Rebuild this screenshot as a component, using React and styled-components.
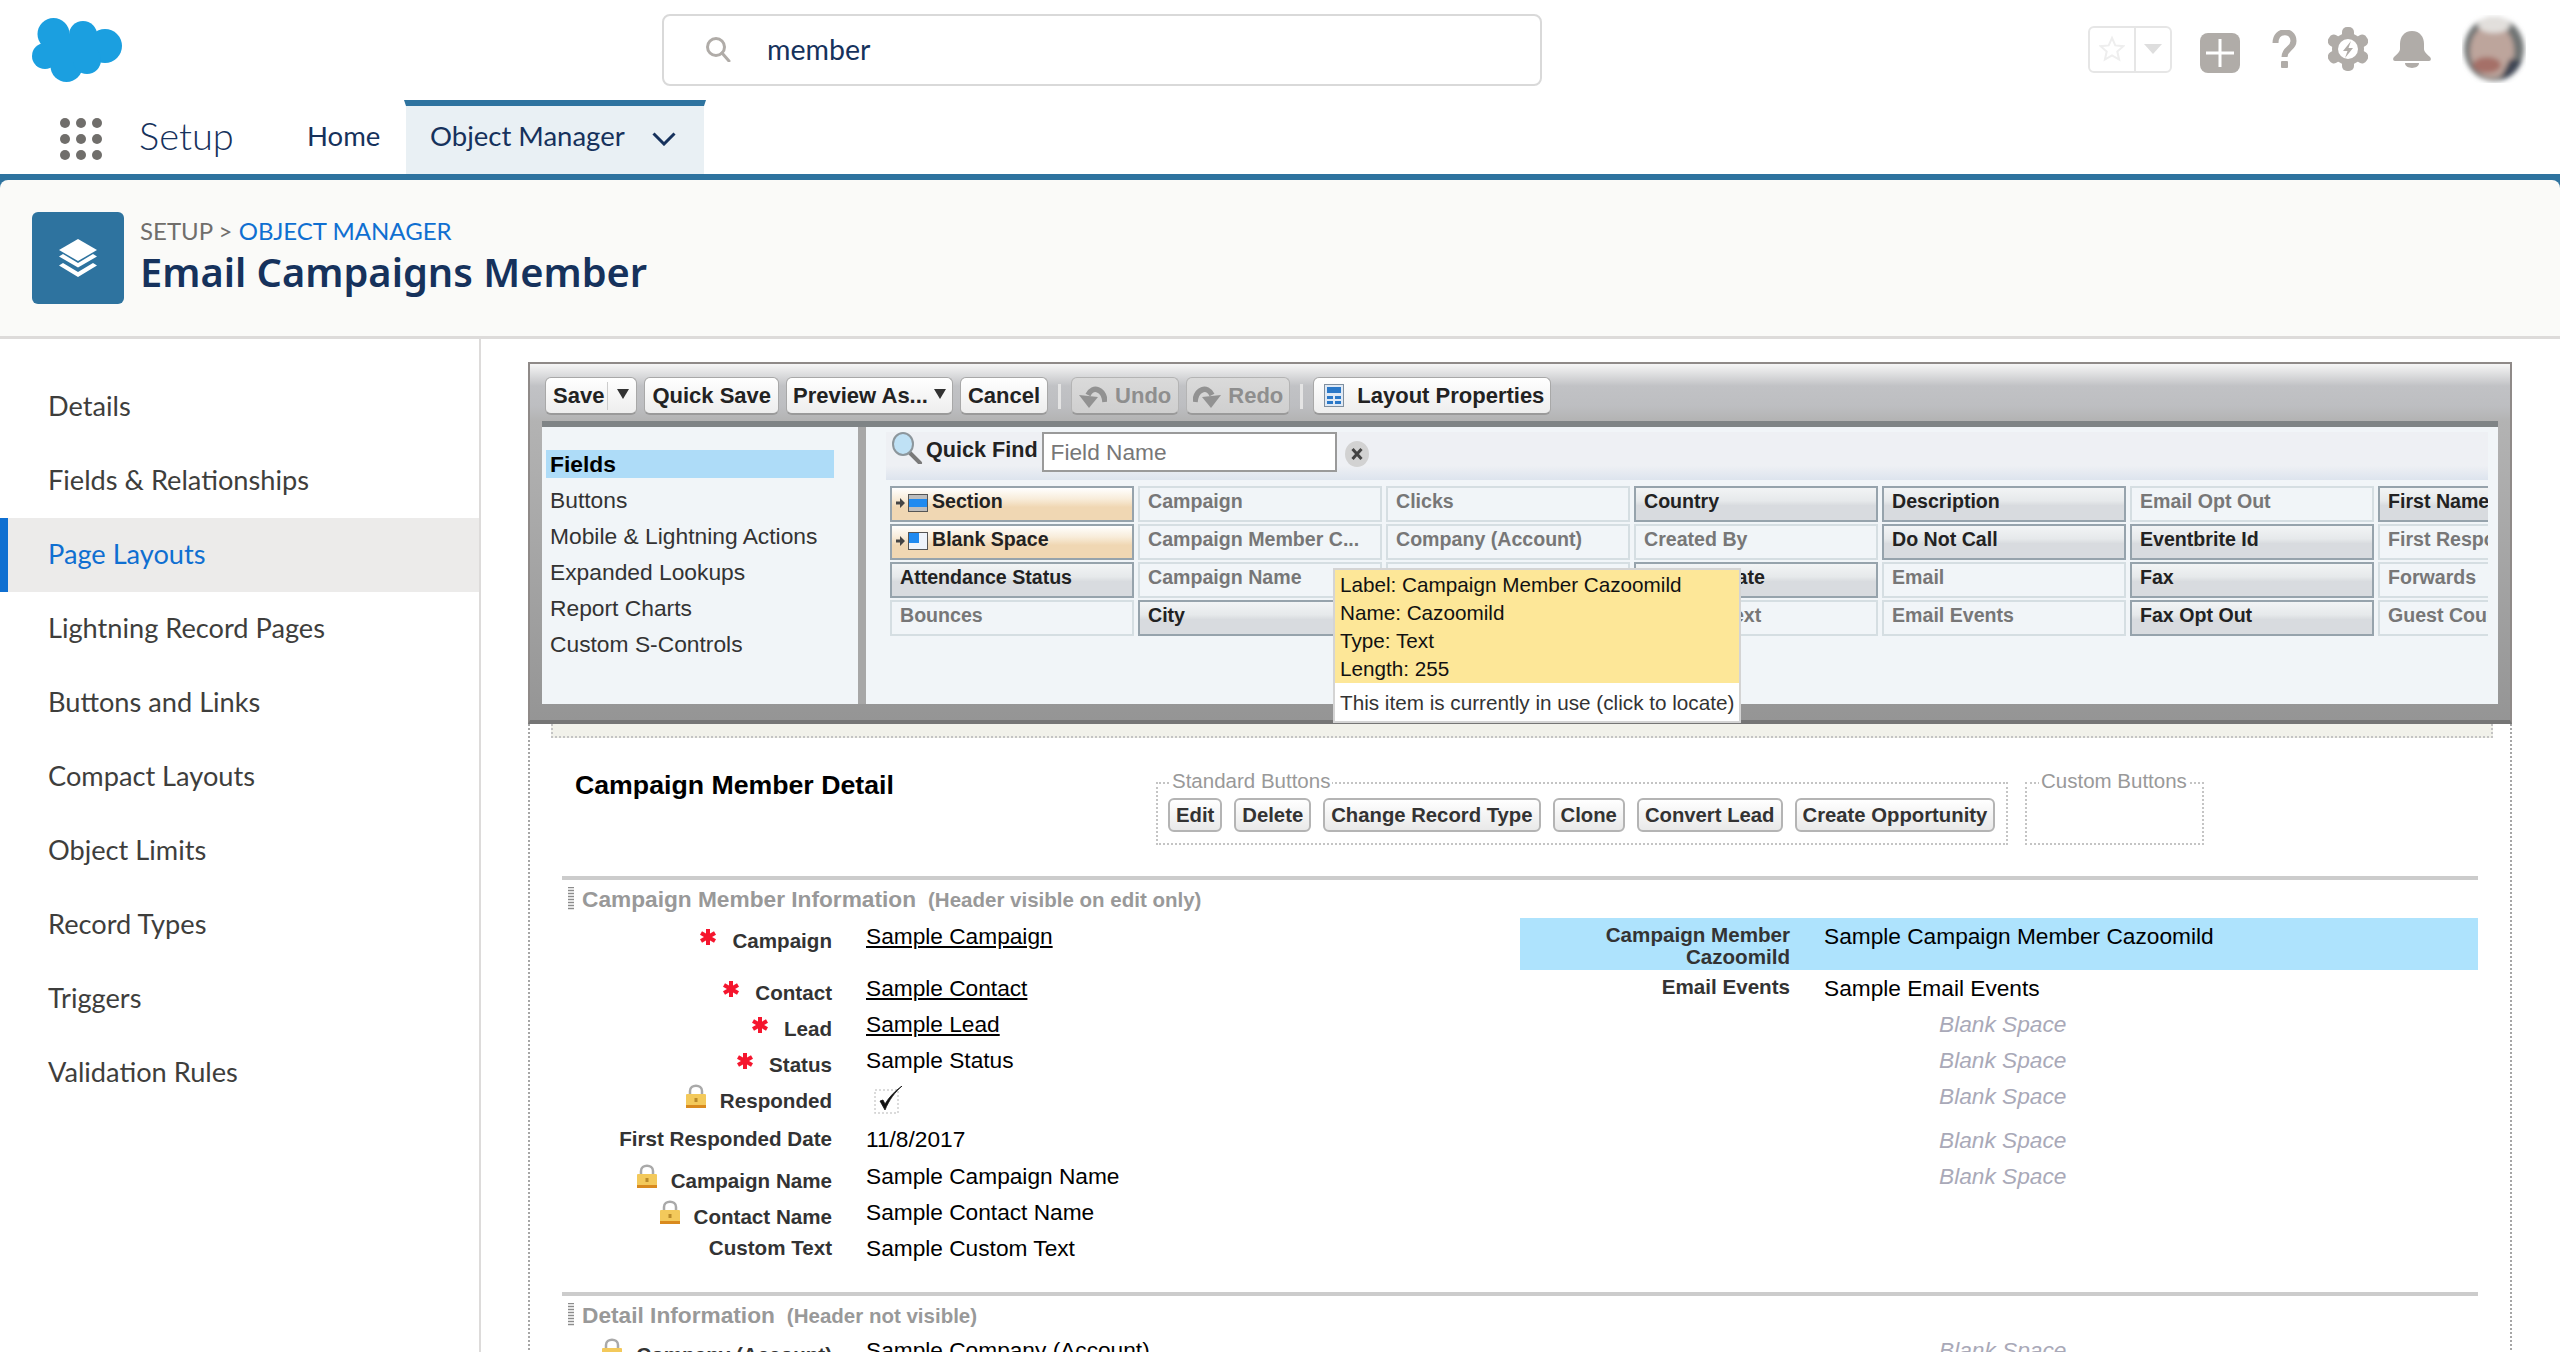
import React from "react";
import styled, { createGlobalStyle } from "styled-components";

const GlobalStyle = createGlobalStyle`
  html, body { margin: 0; padding: 0; background: #fff; }
  body { height: 1352px; overflow: hidden; font-family: "Lato", sans-serif; }
`;

const Page = styled.div`
  width: 2560px;
  height: 1352px;
  overflow: hidden;
  display: flex;
  flex-direction: column;
`;

const TopBar = styled.div`
  height: 100px;
  flex: none;
  display: flex;
  align-items: flex-start;
  position: relative;
`;
const LogoWrap = styled.svg`
  width: 90px;
  height: 64px;
  margin: 18px 0 0 32px;
  flex: none;
`;
const SearchBox = styled.div`
  width: 880px;
  height: 72px;
  box-sizing: border-box;
  margin: 14px 0 0 540px;
  border: 2px solid #d9d9d9;
  border-radius: 8px;
  display: flex;
  align-items: center;
  padding: 0 0 2px 41px;
  gap: 36px;
  font-size: 28.5px;
  color: #16325c;
`;
const TopIcons = styled.div`
  display: flex;
  align-items: center;
  margin: 15px 0 0 546px;
  height: 68px;
`;
const FavBox = styled.div`
  width: 84px;
  height: 47px;
  box-sizing: border-box;
  border: 2px solid #e6e6e6;
  border-radius: 6px;
  display: grid;
  grid-template-columns: 46px 1fr;
  align-items: center;
  justify-items: center;
  margin-right: 28px;
`;
const FavStar = styled.svg`
  width: 26px;
  height: 43px;
  padding: 0 9px;
  border-right: 2px solid #e6e6e6;
  box-sizing: content-box;
`;
const PlusTile = styled.div`
  width: 40px;
  height: 40px;
  background: #b0aca8;
  border-radius: 8px;
  display: flex;
  align-items: center;
  justify-content: center;
  margin: 8px 32px 0 0;
`;
const IconSlot = styled.svg`
  flex: none;
  margin-right: ${(p) => p.$gap}px;
`;
const AvatarImg = styled.svg`
  width: 64px;
  height: 68px;
  flex: none;
`;

const NavBar = styled.div`
  height: 74px;
  flex: none;
  display: flex;
  align-items: stretch;
  padding-left: 60px;
  color: #16325c;
`;
const AppLauncher = styled.svg`
  width: 42px;
  height: 42px;
  margin-top: 18px;
  flex: none;
`;
const AppName = styled.div`
  font-size: 38px;
  font-weight: 300;
  margin-left: 37px;
  width: 168px;
  line-height: 70px;
`;
const NavItem = styled.div`
  font-size: 27.5px;
  line-height: 72px;
  width: 97px;
`;
const ActiveTab = styled.div`
  width: 302px;
  box-sizing: border-box;
  border-style: solid;
  border-width: 6px 2px 0;
  border-color: #2e739f #fff;
  background: #e9f0f4;
  font-size: 27.5px;
  line-height: 60px;
  padding-left: 24px;
  display: flex;
  align-items: flex-start;
  gap: 27px;
`;
const Chevron = styled.svg`
  width: 24px;
  height: 14px;
  margin-top: 26px;
`;

const HeroWrap = styled.div`
  background: #2e739f;
  padding-top: 6px;
  flex: none;
`;
const Hero = styled.div`
  height: 124px;
  background: #fafaf8;
  border-radius: 8px 8px 0 0;
  border-bottom: 3px solid #dddbda;
  display: flex;
  padding: 32px 0 0 32px;
  gap: 16px;
`;
const HeroTile = styled.div`
  width: 92px;
  height: 92px;
  background: #2e739f;
  border-radius: 6px;
  display: flex;
  align-items: center;
  justify-content: center;
`;
const Crumbs = styled.div`
  font-size: 24px;
  line-height: 30px;
  color: #706e6b;
  margin-top: 4px;
`;
const CrumbLink = styled.span`
  color: #0f6fd1;
`;
const HeroTitle = styled.div`
  font-family: "Noto Sans", sans-serif;
  font-size: 39.8px;
  font-weight: 600;
  line-height: 52px;
  color: #16325c;
`;

const Main = styled.div`
  flex: 1;
  display: flex;
  min-height: 0;
`;
const Sidebar = styled.div`
  width: 481px;
  flex: none;
  box-sizing: border-box;
  border-right: 2px solid #dddbda;
  padding-top: 31px;
`;
const SideItem = styled.div`
  height: 74px;
  line-height: 72px;
  font-size: 27.2px;
  box-sizing: border-box;
  padding-left: ${(p) => (p.$active ? 40 : 48)}px;
  color: ${(p) => (p.$active ? "#0f6fd1" : "#3e3e3c")};
  background: ${(p) => (p.$active ? "#ecebea" : "transparent")};
  border-left: ${(p) => (p.$active ? "8px solid #0f6fd1" : "0")};
`;

const Content = styled.div`
  flex: 1;
  padding: 23px 0 0 47px;
  font-family: "Liberation Sans", Arial, sans-serif;
`;
const EditorFrame = styled.div`
  width: 1984px;
  height: 362px;
  box-sizing: border-box;
  position: relative;
  border: 2px solid #8f8a88;
  border-bottom: 4px solid #757575;
  background: linear-gradient(#f6f6f6 0, #c1c2c5 22px, #bdbec1 42px, #b3b3b3 57px, #959595 100%);
`;
const Toolbar = styled.div`
  height: 57px;
  box-sizing: border-box;
  padding: 13px 0 0 15px;
  display: flex;
  gap: 7px;
  align-items: flex-start;
`;
const ToolButton = styled.div`
  height: 38px;
  box-sizing: border-box;
  border: 1px solid ${(p) => (p.$off ? "#b4b4b4" : "#a8a8a8")};
  border-bottom: 2px solid #9a9a9a;
  border-radius: 6px;
  padding: 0 ${(p) => p.$right ?? 7}px 0 ${(p) => p.$left ?? 7}px;
  display: flex;
  align-items: center;
  gap: ${(p) => p.$gap ?? 6}px;
  font-weight: 700;
  font-size: 22px;
  background: ${(p) => (p.$off ? "linear-gradient(#dadada, #cfcfcf)" : "linear-gradient(#fff, #ededed)")};
  color: ${(p) => (p.$off ? "#8e8e8e" : "#222")};
  white-space: nowrap;
`;
const ToolSep = styled.div`
  width: 3px;
  height: 25px;
  margin: 7px 3px 0;
  background: #e4e4e4;
`;
const TriangleMark = styled.span`
  width: 0;
  height: 0;
  border-left: 6px solid transparent;
  border-right: 6px solid transparent;
  border-top: 10px solid #333;
  margin-bottom: 4px;
`;
const SplitBar = styled.span`
  width: 1px;
  height: 28px;
  background: #ccc;
  margin: 0 3px 0 -3px;
`;
const FlipSvg = styled.svg`
  transform: ${(p) => (p.$flip ? "scaleX(-1)" : "none")};
`;
const EditorBody = styled.div`
  margin: 0 12px;
  height: 283px;
  box-sizing: border-box;
  border-top: 6px solid #7f8486;
  display: grid;
  grid-template-columns: 316px 8px 1fr;
  background: #f1f5f8;
`;
const PaletteList = styled.div`
  padding: 23px 24px 0 4px;
  display: flex;
  flex-direction: column;
  gap: 8px;
`;
const PaletteTab = styled.div`
  height: 28px;
  line-height: 28px;
  padding-left: 4px;
  font-size: 22.8px;
  color: ${(p) => (p.$active ? "#000" : "#333")};
  font-weight: ${(p) => (p.$active ? 700 : 400)};
  background: ${(p) => (p.$active ? "#aedcf8" : "transparent")};
`;
const PaletteDivider = styled.div`
  background: #a7a7a7;
`;
const PalettePane = styled.div`
  padding: 5px 10px 0 20px;
  min-width: 0;
`;
const QuickFind = styled.div`
  height: 48px;
  background: linear-gradient(#eef0f4 0, #eef0f4 70%, #dde4ee 100%);
  display: flex;
  align-items: flex-start;
  padding-left: 5px;
`;
const QuickLabel = styled.div`
  font-size: 21.6px;
  font-weight: 700;
  color: #222;
  line-height: 36px;
  margin: 0 4px 0 3px;
`;
const QuickInput = styled.div`
  width: 295px;
  height: 40px;
  box-sizing: border-box;
  border: 2px solid #9a9a9a;
  background: #fff;
  color: #777;
  font-size: 22.7px;
  line-height: 36px;
  padding-left: 7px;
`;
const ClearSlot = styled.div`
  margin: 9px 0 0 8px;
`;
const PaletteGrid = styled.div`
  margin: 6px 0 0 4px;
  display: grid;
  grid-auto-flow: column;
  grid-template-rows: repeat(4, 36px);
  grid-auto-columns: 244px;
  gap: 2px 4px;
  overflow: hidden;
`;
const cellStyles = {
  used: "border-color:#96a3ac;color:#222;background:linear-gradient(#f2f4f5 0,#e6e9eb 40%,#d8dbdf 55%,#d8dbdf 100%);",
  free: "border-color:#d5dee2;color:#777;background:#f1f5f8;",
  special: "border-color:#96a3ac;color:#222;background:linear-gradient(#fff 0,#f8ecd9 35%,#f0d7b3 60%,#f0d7b3 100%);",
};
const PaletteCell = styled.div`
  box-sizing: border-box;
  border: 2px solid;
  ${(p) => cellStyles[p.$kind]}
  font-size: 19.6px;
  font-weight: 700;
  line-height: 26px;
  padding-left: ${(p) => (p.$kind === "special" ? 4 : 8)}px;
  white-space: nowrap;
  overflow: hidden;
  display: flex;
  align-items: flex-start;
  gap: 4px;
`;
const CellGlyph = styled.svg`
  margin-top: 5px;
  flex: none;
`;
const Tooltip = styled.div`
  position: absolute;
  left: 803px;
  top: 204px;
  width: 408px;
  height: 155px;
  box-sizing: border-box;
  border: 2px solid #d4d4d4;
  background: #fff;
  font-size: 20.7px;
  color: #111;
  z-index: 2;
`;
const TooltipInfo = styled.div`
  background: #fde798;
  height: 112px;
  padding: 1px 0 0 5px;
  line-height: 28px;
`;
const TooltipNote = styled.div`
  padding: 7px 0 0 5px;
  line-height: 26px;
  color: #333;
  white-space: nowrap;
`;

const Canvas = styled.div`
  width: 1984px;
  box-sizing: border-box;
  border-left: 2px dotted #a6a6a6;
  border-right: 2px dotted #a6a6a6;
  padding: 0 0 0 32px;
`;
const DropBand = styled.div`
  height: 14px;
  margin: 0 17px 0 -11px;
  box-sizing: border-box;
  background: #f1f1ea;
  border-bottom: 2px dotted #c4c4c4;
  border-left: 2px dotted #c4c4c4;
  border-right: 2px dotted #c4c4c4;
`;
const DetailHead = styled.div`
  height: 138px;
  display: flex;
  align-items: flex-start;
`;
const DetailTitle = styled.div`
  width: 594px;
  flex: none;
  box-sizing: border-box;
  padding: 32px 0 0 13px;
  font-size: 26.7px;
  font-weight: 700;
  line-height: 30px;
  color: #000;
`;
const ButtonGroup = styled.fieldset`
  box-sizing: border-box;
  width: ${(p) => p.$width}px;
  height: 75px;
  margin: 32px ${(p) => p.$after}px 0 0;
  padding: 2px 0 0 10px;
  border: 2px dotted #c4c4c4;
  display: flex;
  gap: 12px;
`;
const GroupLegend = styled.legend`
  font-size: 20.5px;
  line-height: 22px;
  color: #999;
  padding: 0 2px 4px;
  margin-left: 2px;
`;
const DetailButton = styled.div`
  height: 34px;
  box-sizing: border-box;
  border: 2px solid #b4b4b4;
  border-radius: 6px;
  background: linear-gradient(#fff, #e9e9e9);
  font-size: 20.3px;
  font-weight: 700;
  line-height: 30px;
  padding: 0 6px;
  color: #333;
  white-space: nowrap;
`;
const LayoutSection = styled.div`
  width: 1916px;
  border-top: 4px solid #ccc;
  margin-bottom: ${(p) => p.$after}px;
`;
const SectionHead = styled.div`
  height: 38px;
  display: flex;
  align-items: center;
  padding: 1px 0 0 6px;
  box-sizing: border-box;
  gap: 8px;
  color: #999;
  font-weight: 700;
`;
const DragHandle = styled.div`
  width: 6px;
  height: 23px;
  margin-top: -2px;
  background: repeating-linear-gradient(#8c8c8c 0, #8c8c8c 1.500px, #e4e4e4 1.500px, #e4e4e4 3px);
`;
const SectionName = styled.span`
  font-size: 22.7px;
`;
const SectionHint = styled.span`
  font-size: 20.5px;
  margin-left: 4px;
`;
const FieldRow = styled.div`
  height: ${(p) => p.$height}px;
  display: grid;
  grid-template-columns: 958px 958px;
`;
const FieldCell = styled.div`
  display: grid;
  grid-template-columns: 270px 1fr;
  column-gap: 34px;
  background: ${(p) => (p.$hot ? "#aee3fd" : "transparent")};
`;
const FieldLabel = styled.div`
  padding-top: ${(p) => p.$top}px;
  display: flex;
  justify-content: flex-end;
  align-items: flex-start;
  text-align: right;
  gap: ${(p) => p.$gap || 16}px;
  font-size: 20.6px;
  font-weight: 700;
  line-height: 22px;
  color: #333;
  white-space: ${(p) => (p.$wrap ? "normal" : "nowrap")};
`;
const FieldValue = styled.div`
  padding-top: ${(p) => p.$top}px;
  font-size: 22.7px;
  line-height: 22px;
  color: #000;
  white-space: nowrap;
  text-decoration: ${(p) => (p.$link ? "underline" : "none")};
`;
const BlankValue = styled.div`
  padding: ${(p) => p.$top}px 0 0 419px;
  font-size: 22.7px;
  font-style: italic;
  line-height: 22px;
  color: #a9a9b8;
  white-space: nowrap;
`;
const CheckSlot = styled.svg`
  width: 30px;
  height: 28px;
  margin: 8px 0 0 8px;
  display: block;
`;
const MarkIcon = styled.svg`
  flex: none;
  margin-top: ${(p) => p.$up}px;
`;

function SalesforceCloud() {
  return (
    <LogoWrap viewBox="0 0 90 64">
      <g fill="#1b9fe0">
        <circle cx="21.500" cy="16" r="16" />
        <circle cx="51" cy="17" r="14" />
        <circle cx="73" cy="28" r="17" />
        <circle cx="13" cy="38" r="13" />
        <circle cx="34.500" cy="48" r="16" />
        <circle cx="55" cy="42" r="14" />
        <rect x="15" y="16" width="50" height="28" />
      </g>
    </LogoWrap>
  );
}

function Magnifier() {
  return (
    <svg width="26" height="26" viewBox="0 0 26 26" fill="none" stroke="#b0aca8" strokeWidth="3">
      <circle cx="11" cy="11" r="8.500" />
      <path d="M17 17l7 8" strokeLinecap="round" />
    </svg>
  );
}

function HeaderIcons() {
  return (
    <TopIcons>
      <FavBox>
        <FavStar viewBox="0 0 26 43" fill="none" stroke="#eeeeee" strokeWidth="2">
          <path d="M13 10l3.300 7.400 8 .8-6 5.300 1.800 8L13 27.400 5.900 31.500l1.800-8-6-5.300 8-.8z" />
        </FavStar>
        <svg width="18" height="10" viewBox="0 0 18 10">
          <path d="M0 0h18L9 10z" fill="#dedede" />
        </svg>
      </FavBox>
      <PlusTile>
        <svg width="28" height="28" viewBox="0 0 28 28">
          <path d="M12.500 0h3v12.500H28v3H15.500V28h-3V15.500H0v-3h12.500z" fill="#fff" />
        </svg>
      </PlusTile>
      <IconSlot $gap={31} width="25" height="38" viewBox="0 0 25 38" fill="none">
        <path d="M3.500 13C3.500 -1 21.500 -1 21.500 11c0 8-9 7-9 16" stroke="#b0aca8" strokeWidth="6" />
        <rect x="9" y="31" width="7" height="7" rx="1" fill="#b0aca8" />
      </IconSlot>
      <IconSlot $gap={25} width="40" height="44" viewBox="0 0 40 44">
        <g fill="#b0aca8">
          <circle cx="20" cy="22" r="16" />
          <rect x="14" y="0" width="12" height="44" rx="5" />
          <rect x="14" y="0" width="12" height="44" rx="5" transform="rotate(60 20 22)" />
          <rect x="14" y="0" width="12" height="44" rx="5" transform="rotate(120 20 22)" />
        </g>
        <circle cx="20" cy="22" r="10" fill="#fff" />
        <path d="M23 14l-8 10h4.500L17 31l8-10h-4.500z" fill="#b0aca8" />
      </IconSlot>
      <IconSlot $gap={31} width="38" height="37" viewBox="0 0 38 37">
        <path d="M19 0c8 0 12 6 12 13v5c0 3 3 5 6 8 1.500 1.500 1 4-1 4H2c-2 0-2.500-2.500-1-4 3-3 6-5 6-8v-5C7 6 11 0 19 0z" fill="#b0aca8" />
        <path d="M12 32h14c0 6.500-14 6.500-14 0z" fill="#b0aca8" />
      </IconSlot>
      <AvatarImg viewBox="0 0 64 68">
        <defs>
          <filter id="avatarBlur" x="-20%" y="-20%" width="140%" height="140%"><feGaussianBlur stdDeviation="2.600" /></filter>
          <clipPath id="avatarClip"><ellipse cx="32" cy="34" rx="30" ry="32" /></clipPath>
        </defs>
        <g filter="url(#avatarBlur)">
          <ellipse cx="32" cy="34" rx="30" ry="32" fill="#6f7373" />
          <g clipPath="url(#avatarClip)">
            <ellipse cx="30" cy="36" rx="22" ry="27" fill="#bda59c" />
            <ellipse cx="32" cy="10" rx="16" ry="8" fill="#e2dfdc" />
            <ellipse cx="25" cy="50" rx="14" ry="8" fill="#a56f68" />
            <path d="M48 44l16 2v22H36z" fill="#3c4552" />
          </g>
        </g>
      </AvatarImg>
    </TopIcons>
  );
}

function Launcher() {
  const dots = [5, 21, 37];
  return (
    <AppLauncher viewBox="0 0 42 42">
      {dots.map((y) => dots.map((x) => <circle key={`${x}-${y}`} cx={x} cy={y} r="5" fill="#706e6b" />))}
    </AppLauncher>
  );
}

function LayersGlyph() {
  return (
    <svg width="38" height="38" viewBox="0 0 38 38" fill="#fff">
      <path d="M19 0l19 11-19 11L0 11z" />
      <path d="M4 15l15 9 15-9 4 2.500-19 11-19-11z" />
      <path d="M4 24l15 9 15-9 4 2.500L19 38 0 26.500z" />
    </svg>
  );
}

function UndoGlyph({ flip }) {
  return (
    <FlipSvg $flip={flip} width="28" height="24" viewBox="0 0 28 24">
      <path d="M26 18C25 5 14 1 9 11" fill="none" stroke="#929292" strokeWidth="5.500" />
      <path d="M0 11l19 2-9 11z" fill="#929292" />
    </FlipSvg>
  );
}

function LayoutGlyph() {
  return (
    <svg width="20" height="23" viewBox="0 0 20 23">
      <rect x="0.500" y="0.500" width="19" height="22" fill="#dfe9f5" stroke="#7f8f9f" />
      <rect x="3" y="3" width="14" height="6" fill="#2a78c8" />
      <rect x="3" y="12" width="6" height="3" fill="#2a78c8" />
      <rect x="11" y="12" width="6" height="3" fill="#2a78c8" />
      <rect x="3" y="17" width="6" height="3" fill="#2a78c8" />
      <rect x="11" y="17" width="6" height="3" fill="#2a78c8" />
    </svg>
  );
}

function FindGlyph() {
  return (
    <svg width="32" height="32" viewBox="0 0 32 32">
      <path d="M19 21l10 10" stroke="#7a7a7a" strokeWidth="4" strokeLinecap="round" />
      <ellipse cx="12" cy="12" rx="10" ry="11" fill="#bfe1f5" stroke="#8c969c" strokeWidth="2" />
    </svg>
  );
}

function ClearGlyph() {
  return (
    <svg width="24" height="26" viewBox="0 0 24 26">
      <ellipse cx="12" cy="13" rx="12" ry="13" fill="#d2d2d2" />
      <path d="M7.500 8l9 10m0-10l-9 10" stroke="#444" strokeWidth="3" />
    </svg>
  );
}

function PaletteGlyph({ blank }) {
  return (
    <CellGlyph width="32" height="20" viewBox="0 0 32 20">
      <path d="M0 8.500h4V5l5 5-5 5v-3.500H0z" fill="#444" />
      {blank ? (
        <g>
          <rect x="12.500" y="1.500" width="19" height="17" fill="#eef3fa" stroke="#555" />
          <rect x="13" y="2" width="10" height="10" fill="#1f8af0" />
        </g>
      ) : (
        <g>
          <rect x="12.500" y="1.500" width="19" height="17" fill="#bdbdbd" stroke="#555" />
          <rect x="13" y="6" width="18" height="8" fill="#1f8af0" />
        </g>
      )}
    </CellGlyph>
  );
}

function RequiredMark() {
  return (
    <MarkIcon $up={-1} width="16" height="16" viewBox="0 0 16 16">
      <g stroke="#f5162e" strokeWidth="4">
        <path d="M8 0v16" />
        <path d="M1 4l14 8" />
        <path d="M15 4L1 12" />
      </g>
    </MarkIcon>
  );
}

function LockMark() {
  return (
    <MarkIcon $up={-6} width="20" height="24" viewBox="0 0 20 24">
      <path d="M4 11V7c0-7 12-7 12 0v4" fill="none" stroke="#a9a9a9" strokeWidth="2.500" />
      <rect x="0" y="10" width="20" height="14" rx="1" fill="#f3c95b" />
      <rect x="0" y="21" width="20" height="3" fill="#d98a1e" />
      <rect x="8.500" y="14" width="3" height="4" fill="#b98a2a" />
    </MarkIcon>
  );
}

function CheckedBox() {
  return (
    <CheckSlot viewBox="0 0 30 28">
      <rect x="1" y="4" width="23" height="23" fill="none" stroke="#d0d0d0" strokeWidth="1.500" strokeDasharray="2 2" />
      <path d="M6 15l5 9C15 14 21 6 28 0c-7 5-13 11-17 18l-2-4z" fill="#111" stroke="#111" strokeWidth="0.800" />
    </CheckSlot>
  );
}

const sideLinks = [
  "Details",
  "Fields & Relationships",
  "Page Layouts",
  "Lightning Record Pages",
  "Buttons and Links",
  "Compact Layouts",
  "Object Limits",
  "Record Types",
  "Triggers",
  "Validation Rules",
];

const paletteTabs = [
  "Fields",
  "Buttons",
  "Mobile & Lightning Actions",
  "Expanded Lookups",
  "Report Charts",
  "Custom S-Controls",
];

const paletteCells = [
  ["Section", "special", "section"],
  ["Blank Space", "special", "blank"],
  ["Attendance Status", "used"],
  ["Bounces", "free"],
  ["Campaign", "free"],
  ["Campaign Member C...", "free"],
  ["Campaign Name", "free"],
  ["City", "used"],
  ["Clicks", "free"],
  ["Company (Account)", "free"],
  ["", "free"],
  ["", "free"],
  ["Country", "used"],
  ["Created By", "free"],
  ["Created Date", "used"],
  ["Custom Text", "free"],
  ["Description", "used"],
  ["Do Not Call", "used"],
  ["Email", "free"],
  ["Email Events", "free"],
  ["Email Opt Out", "free"],
  ["Eventbrite Id", "used"],
  ["Fax", "used"],
  ["Fax Opt Out", "used"],
  ["First Name", "used"],
  ["First Responded Date", "free"],
  ["Forwards", "free"],
  ["Guest Count", "free"],
];

const detailButtons = ["Edit", "Delete", "Change Record Type", "Clone", "Convert Lead", "Create Opportunity"];

const infoRows = [
  { h: 52, label: "Campaign", mark: "req", lt: 12, value: "Sample Campaign", link: true, vt: 7, right: "hot" },
  { h: 36, label: "Contact", mark: "req", lt: 12, value: "Sample Contact", link: true, vt: 7, right: "email" },
  { h: 36, label: "Lead", mark: "req", lt: 12, value: "Sample Lead", link: true, vt: 7, blank: 7 },
  { h: 36, label: "Status", mark: "req", lt: 12, value: "Sample Status", vt: 7, blank: 7 },
  { h: 41, label: "Responded", mark: "lock", lt: 12, check: true, blank: 7 },
  { h: 40, label: "First Responded Date", lt: 9, value: "11/8/2017", vt: 9, blank: 10 },
  { h: 36, label: "Campaign Name", mark: "lock", lt: 11, value: "Sample Campaign Name", vt: 6, blank: 6 },
  { h: 36, label: "Contact Name", mark: "lock", lt: 11, value: "Sample Contact Name", vt: 6 },
  { h: 36, label: "Custom Text", lt: 6, value: "Sample Custom Text", vt: 6 },
];

function InfoRow({ row }) {
  return (
    <FieldRow $height={row.h}>
      <FieldCell>
        <FieldLabel $top={row.lt} $gap={row.mark === "lock" ? 14 : 16}>
          {row.mark === "req" && <RequiredMark />}
          {row.mark === "lock" && <LockMark />}
          {row.label}
        </FieldLabel>
        {row.check ? (
          <CheckedBox />
        ) : (
          <FieldValue $top={row.vt} $link={row.link}>{row.value}</FieldValue>
        )}
      </FieldCell>
      {row.right === "hot" && (
        <FieldCell $hot>
          <FieldLabel $top={6} $wrap>Campaign Member Cazoomild</FieldLabel>
          <FieldValue $top={7}>Sample Campaign Member Cazoomild</FieldValue>
        </FieldCell>
      )}
      {row.right === "email" && (
        <FieldCell>
          <FieldLabel $top={6}>Email Events</FieldLabel>
          <FieldValue $top={7}>Sample Email Events</FieldValue>
        </FieldCell>
      )}
      {row.blank !== undefined && <BlankValue $top={row.blank}>Blank Space</BlankValue>}
    </FieldRow>
  );
}

export default function App() {
  return (
    <Page>
      <GlobalStyle />
      <TopBar>
        <SalesforceCloud />
        <SearchBox>
          <Magnifier />
          member
        </SearchBox>
        <HeaderIcons />
      </TopBar>
      <NavBar>
        <Launcher />
        <AppName>Setup</AppName>
        <NavItem>Home</NavItem>
        <ActiveTab>
          Object Manager
          <Chevron viewBox="0 0 24 14" fill="none" stroke="#16325c" strokeWidth="3">
            <path d="M1.500 1.500L12 12 22.500 1.500" />
          </Chevron>
        </ActiveTab>
      </NavBar>
      <HeroWrap>
        <Hero>
          <HeroTile><LayersGlyph /></HeroTile>
          <div>
            <Crumbs>SETUP &gt; <CrumbLink>OBJECT MANAGER</CrumbLink></Crumbs>
            <HeroTitle>Email Campaigns Member</HeroTitle>
          </div>
        </Hero>
      </HeroWrap>
      <Main>
        <Sidebar>
          {sideLinks.map((item) => (
            <SideItem key={item} $active={item === "Page Layouts"}>{item}</SideItem>
          ))}
        </Sidebar>
        <Content>
          <EditorFrame>
            <Toolbar>
              <ToolButton>Save<SplitBar /><TriangleMark /></ToolButton>
              <ToolButton>Quick Save</ToolButton>
              <ToolButton $left={6} $right={6}>Preview As...<TriangleMark /></ToolButton>
              <ToolButton>Cancel</ToolButton>
              <ToolSep />
              <ToolButton $off $left={7} $right={7} $gap={8}><UndoGlyph />Undo</ToolButton>
              <ToolButton $off $left={6} $right={6} $gap={7}><UndoGlyph flip />Redo</ToolButton>
              <ToolSep />
              <ToolButton $left={10} $right={6} $gap={13}><LayoutGlyph />Layout Properties</ToolButton>
            </Toolbar>
            <EditorBody>
              <PaletteList>
                {paletteTabs.map((tab) => (
                  <PaletteTab key={tab} $active={tab === "Fields"}>{tab}</PaletteTab>
                ))}
              </PaletteList>
              <PaletteDivider />
              <PalettePane>
                <QuickFind>
                  <FindGlyph />
                  <QuickLabel>Quick Find</QuickLabel>
                  <QuickInput>Field Name</QuickInput>
                  <ClearSlot><ClearGlyph /></ClearSlot>
                </QuickFind>
                <PaletteGrid>
                  {paletteCells.map(([text, kind, glyph], i) => (
                    <PaletteCell key={i} $kind={kind}>
                      {glyph && <PaletteGlyph blank={glyph === "blank"} />}
                      {text}
                    </PaletteCell>
                  ))}
                </PaletteGrid>
              </PalettePane>
            </EditorBody>
            <Tooltip>
              <TooltipInfo>
                Label: Campaign Member Cazoomild<br />
                Name: Cazoomild<br />
                Type: Text<br />
                Length: 255
              </TooltipInfo>
              <TooltipNote>This item is currently in use (click to locate)</TooltipNote>
            </Tooltip>
          </EditorFrame>
          <Canvas>
            <DropBand />
            <DetailHead>
              <DetailTitle>Campaign Member Detail</DetailTitle>
              <ButtonGroup $width={852} $after={17}>
                <GroupLegend>Standard Buttons</GroupLegend>
                {detailButtons.map((b) => <DetailButton key={b}>{b}</DetailButton>)}
              </ButtonGroup>
              <ButtonGroup $width={179} $after={0}>
                <GroupLegend>Custom Buttons</GroupLegend>
              </ButtonGroup>
            </DetailHead>
            <LayoutSection $after={25}>
              <SectionHead>
                <DragHandle />
                <SectionName>Campaign Member Information</SectionName>
                <SectionHint>(Header visible on edit only)</SectionHint>
              </SectionHead>
              {infoRows.map((row) => <InfoRow key={row.label} row={row} />)}
            </LayoutSection>
            <LayoutSection $after={0}>
              <SectionHead>
                <DragHandle />
                <SectionName>Detail Information</SectionName>
                <SectionHint>(Header not visible)</SectionHint>
              </SectionHead>
              <FieldRow $height={36}>
                <FieldCell>
                  <FieldLabel $top={10} $gap={14}><LockMark />Company (Account)</FieldLabel>
                  <FieldValue $top={5}>Sample Company (Account)</FieldValue>
                </FieldCell>
                <BlankValue $top={5}>Blank Space</BlankValue>
              </FieldRow>
            </LayoutSection>
          </Canvas>
        </Content>
      </Main>
    </Page>
  );
}
